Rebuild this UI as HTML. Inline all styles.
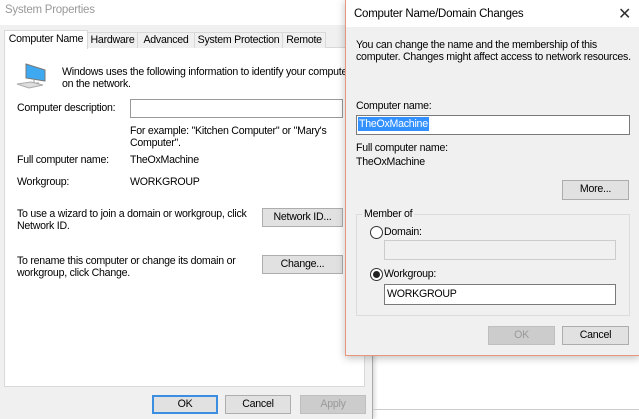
<html><head><style>
body{margin:0;width:639px;height:419px;overflow:hidden;background:#fff;font-family:"Liberation Sans",sans-serif;font-size:10.6px;letter-spacing:-0.25px;color:#000;position:relative}
div{white-space:nowrap}
.a{position:absolute}
.btn{position:absolute;background:#e1e1e1;border:1px solid #adadad;box-sizing:border-box;text-align:center;line-height:17px}
.inp{position:absolute;background:#fff;border:1px solid #7a7a7a;box-sizing:border-box}
.tab{position:absolute;top:32px;height:16px;border:1px solid #d9d9d9;border-bottom:none;background:#f0f0f0;box-sizing:border-box;text-align:center;line-height:15px}
</style></head><body>
<div class="a" style="left:0;top:0;width:372px;height:419px;background:#f0f0f0;border-right:1px solid #aaa;box-shadow:2px 0 4px rgba(0,0,0,.15)"></div>
<div class="a" style="left:0;top:0;width:372px;height:25px;background:#fff"></div>
<div class="a" style="left:5px;top:4px;color:#999;font-size:11.5px">System Properties</div>
<div class="a" style="left:4px;top:47px;width:361px;height:340px;background:#fff;border:1px solid #d9d9d9;box-sizing:border-box"></div>
<div class="tab" style="left:87px;width:51px">Hardware</div>
<div class="tab" style="left:137px;width:58px">Advanced</div>
<div class="tab" style="left:194px;width:89px">System Protection</div>
<div class="tab" style="left:282px;width:44px">Remote</div>
<div class="tab" style="left:4px;top:30px;height:19px;width:84px;background:#fff;line-height:16px">Computer Name</div>
<svg class="a" style="left:14px;top:60px" width="34" height="30"><path d="M12 4 L31 10 L31 21 L12 18Z" fill="#3ea8f0" stroke="#777" stroke-width="1"/><path d="M20 20 L20 23 L25 23" stroke="#999" fill="none"/><path d="M3 24 L17 22 L29 25 L15 28Z" fill="#ddd" stroke="#aaa"/></svg>
<div class="a" style="left:62px;top:66px;line-height:12px">Windows uses the following information to identify your computer<br>on the network.</div>
<div class="a" style="left:17px;top:102px">Computer description:</div>
<div class="inp" style="left:130px;top:99px;width:213px;height:19px;border-color:#999"></div>
<div class="a" style="left:130px;top:125px;line-height:12px">For example: "Kitchen Computer" or "Mary's<br>Computer".</div>
<div class="a" style="left:17px;top:154px">Full computer name:</div>
<div class="a" style="left:130px;top:154px">TheOxMachine</div>
<div class="a" style="left:17px;top:176px">Workgroup:</div>
<div class="a" style="left:130px;top:176px">WORKGROUP</div>
<div class="a" style="left:17px;top:208px;line-height:12px">To use a wizard to join a domain or workgroup, click<br>Network ID.</div>
<div class="btn" style="left:262px;top:208px;width:81px;height:19px">Network ID...</div>
<div class="a" style="left:17px;top:255px;line-height:12px">To rename this computer or change its domain or<br>workgroup, click Change.</div>
<div class="btn" style="left:262px;top:255px;width:81px;height:19px">Change...</div>
<div class="btn" style="left:152px;top:395px;width:66px;height:19px;border:2px solid #3c8fe0;line-height:15px">OK</div>
<div class="btn" style="left:225px;top:395px;width:66px;height:19px">Cancel</div>
<div class="btn" style="left:300px;top:395px;width:66px;height:19px;background:#ccc;border-color:#bfbfbf;color:#999">Apply</div>
<div class="a" style="left:373px;top:409px;width:266px;height:1px;background:#ccc"></div>
<div class="a" style="left:345px;top:-1px;width:295px;height:357px;background:#f0f0f0;border:1px solid #e8977f;box-sizing:border-box;box-shadow:0 2px 8px rgba(0,0,0,.25)"></div>
<div class="a" style="left:346px;top:0;width:293px;height:27px;background:#fff"></div>
<div class="a" style="left:354px;top:8px;font-size:11.5px">Computer Name/Domain Changes</div>
<div class="a" style="left:618px;top:4px;font-size:16px;color:#333">✕</div>
<div class="a" style="left:356px;top:39px;line-height:12px">You can change the name and the membership of this<br>computer. Changes might affect access to network resources.</div>
<div class="a" style="left:356px;top:100px">Computer name:</div>
<div class="inp" style="left:356px;top:115px;width:274px;height:20px"></div>
<div class="a" style="left:358px;top:117px;background:#3390ff;color:#fff;line-height:14px;padding:0 1px">TheOxMachine</div>
<div class="a" style="left:356px;top:142px">Full computer name:</div>
<div class="a" style="left:356px;top:156px">TheOxMachine</div>
<div class="btn" style="left:562px;top:180px;width:67px;height:20px">More...</div>
<div class="a" style="left:356px;top:214px;width:274px;height:102px;border:1px solid #dcdcdc;box-sizing:border-box"></div>
<div class="a" style="left:362px;top:208px;background:#f0f0f0;padding:0 2px">Member of</div>
<div class="a" style="left:370px;top:226px;width:11px;height:11px;border:1px solid #333;border-radius:50%;background:#fff"></div>
<div class="a" style="left:384px;top:226px">Domain:</div>
<div class="a" style="left:384px;top:240px;width:232px;height:20px;border:1px solid #ccc;box-sizing:border-box;background:#f0f0f0"></div>
<div class="a" style="left:370px;top:268px;width:11px;height:11px;border:1px solid #333;border-radius:50%;background:#fff"></div>
<div class="a" style="left:373px;top:271px;width:7px;height:7px;border-radius:50%;background:#222"></div>
<div class="a" style="left:384px;top:268px">Workgroup:</div>
<div class="inp" style="left:384px;top:284px;width:232px;height:21px"></div>
<div class="a" style="left:387px;top:288px">WORKGROUP</div>
<div class="btn" style="left:488px;top:326px;width:67px;height:19px;background:#ccc;border-color:#bfbfbf;color:#999">OK</div>
<div class="btn" style="left:562px;top:326px;width:67px;height:19px">Cancel</div>
</body></html>
